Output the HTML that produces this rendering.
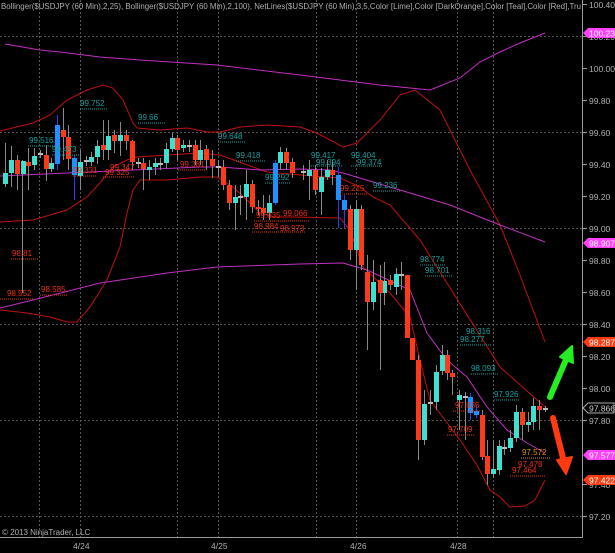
<!DOCTYPE html>
<html><head><meta charset="utf-8"><style>
html,body{margin:0;padding:0;background:#000;}
svg{display:block;font-family:"Liberation Sans",sans-serif;}
</style></head><body>
<svg width="615" height="553" viewBox="0 0 615 553" xmlns="http://www.w3.org/2000/svg">
<rect width="615" height="553" fill="#000"/>
<!-- grid -->
<g stroke="#555" stroke-width="1" stroke-dasharray="2,2">
<line x1="0" y1="36.5" x2="582" y2="36.5"/><line x1="0" y1="132.5" x2="582" y2="132.5"/>
<line x1="0" y1="228.5" x2="582" y2="228.5"/><line x1="0" y1="324.5" x2="582" y2="324.5"/>
<line x1="0" y1="420.5" x2="582" y2="420.5"/><line x1="0" y1="516.5" x2="582" y2="516.5"/>
<line x1="39.5" y1="0" x2="39.5" y2="537"/><line x1="80.5" y1="0" x2="80.5" y2="537"/>
<line x1="177.5" y1="0" x2="177.5" y2="537"/><line x1="218.5" y1="0" x2="218.5" y2="537"/>
<line x1="316.5" y1="0" x2="316.5" y2="537"/><line x1="356.5" y1="0" x2="356.5" y2="537"/>
<line x1="457.5" y1="0" x2="457.5" y2="537"/><line x1="493.5" y1="0" x2="493.5" y2="537"/>
</g>
<!-- bands -->
<g fill="none" stroke-width="1">
<polyline stroke="#c01010" points="0,131 33,123 50,115 67,100 87,90 103,85 113,88 123,100 133,123 137,128 160,130 187,128 207,132 220,132 240,127 267,125 300,127 317,133 343,147 357,143 367,133 380,120 400,95 415,90 440,110 470,170 500,225 520,275 545,342"/>
<polyline stroke="#c01010" points="0,222 33,220 67,210 87,197 100,183 113,167 127,160 137,157 167,155 200,153 220,155 253,167 267,172 300,175 340,178 360,187 373,197 390,205 420,240 445,280 500,367 545,407"/>
<polyline stroke="#c01010" points="0,310 27,313 50,317 67,322 77,322 90,307 107,280 120,247 127,213 133,190 140,180 167,180 200,177 217,177 233,187 247,200 260,213 275,217 293,217 340,218 350,230 363,267 390,293 410,317 420,360 430,400 445,420 460,440 477,465 490,490 500,497 510,507 525,506 535,500 545,480"/>
<polyline stroke="#c030c0" points="5,44 40,50 60,52 100,57 140,60 217,65 300,75 380,85 430,90 460,78 480,62 500,52 520,43 545,33"/>
<polyline stroke="#c030c0" points="0,176 67,173 133,170 200,167 220,167 260,170 300,169 330,170 343,173 373,182 400,190 450,205 500,225 545,242"/>
<polyline stroke="#c030c0" points="0,308 33,300 100,283 167,273 217,267 300,264 343,263 367,270 410,290 427,333 447,360 467,377 487,407 507,430 527,443 545,453"/>
</g>
<!-- wicks -->
<g stroke="#8a8a8a" stroke-width="1">
<line x1="5.5" y1="143" x2="5.5" y2="187"/><line x1="11.5" y1="146" x2="11.5" y2="187"/><line x1="17.5" y1="155" x2="17.5" y2="190"/><line x1="22.5" y1="160" x2="22.5" y2="293"/><line x1="28.5" y1="148" x2="28.5" y2="190"/><line x1="34.5" y1="148" x2="34.5" y2="170"/><line x1="40.5" y1="150" x2="40.5" y2="158"/><line x1="46.5" y1="145" x2="46.5" y2="181"/><line x1="51.5" y1="158" x2="51.5" y2="172"/><line x1="63.5" y1="108" x2="63.5" y2="160"/><line x1="68.5" y1="125" x2="68.5" y2="170"/><line x1="80.5" y1="150" x2="80.5" y2="190"/><line x1="86.5" y1="156" x2="86.5" y2="166"/><line x1="91.5" y1="152" x2="91.5" y2="166"/><line x1="97.5" y1="140" x2="97.5" y2="164"/><line x1="103.5" y1="120" x2="103.5" y2="160"/><line x1="108.5" y1="120" x2="108.5" y2="160"/><line x1="114.5" y1="130" x2="114.5" y2="153"/><line x1="120.5" y1="122" x2="120.5" y2="156"/><line x1="126.5" y1="130" x2="126.5" y2="150"/><line x1="132.5" y1="140" x2="132.5" y2="170"/><line x1="138.5" y1="158" x2="138.5" y2="168"/><line x1="143.5" y1="158" x2="143.5" y2="190"/><line x1="149.5" y1="160" x2="149.5" y2="180"/><line x1="155.5" y1="158" x2="155.5" y2="175"/><line x1="160.5" y1="158" x2="160.5" y2="170"/><line x1="166.5" y1="143" x2="166.5" y2="168"/><line x1="172.5" y1="133" x2="172.5" y2="152"/><line x1="177.5" y1="135" x2="177.5" y2="160"/><line x1="183.5" y1="140" x2="183.5" y2="152"/><line x1="189.5" y1="140" x2="189.5" y2="152"/><line x1="195.5" y1="140" x2="195.5" y2="165"/><line x1="200.5" y1="140" x2="200.5" y2="165"/><line x1="206.5" y1="145" x2="206.5" y2="170"/><line x1="212.5" y1="150" x2="212.5" y2="178"/><line x1="218.5" y1="160" x2="218.5" y2="177"/><line x1="223.5" y1="160" x2="223.5" y2="190"/><line x1="229.5" y1="180" x2="229.5" y2="210"/><line x1="235.5" y1="185" x2="235.5" y2="230"/><line x1="240.5" y1="185" x2="240.5" y2="215"/><line x1="246.5" y1="170" x2="246.5" y2="220"/><line x1="252.5" y1="180" x2="252.5" y2="213"/><line x1="258.5" y1="200" x2="258.5" y2="215"/><line x1="263.5" y1="195" x2="263.5" y2="220"/><line x1="269.5" y1="195" x2="269.5" y2="220"/><line x1="280.5" y1="147" x2="280.5" y2="170"/><line x1="286.5" y1="148" x2="286.5" y2="170"/><line x1="292.5" y1="158" x2="292.5" y2="178"/><line x1="303.5" y1="165" x2="303.5" y2="180"/><line x1="309.5" y1="160" x2="309.5" y2="200"/><line x1="315.5" y1="165" x2="315.5" y2="195"/><line x1="321.5" y1="168" x2="321.5" y2="215"/><line x1="327.5" y1="160" x2="327.5" y2="180"/><line x1="332.5" y1="160" x2="332.5" y2="185"/><line x1="350.5" y1="205" x2="350.5" y2="260"/><line x1="356.5" y1="200" x2="356.5" y2="290"/><line x1="361.5" y1="205" x2="361.5" y2="270"/><line x1="367.5" y1="255" x2="367.5" y2="350"/><line x1="373.5" y1="260" x2="373.5" y2="310"/><line x1="380.5" y1="265" x2="380.5" y2="370"/><line x1="384.5" y1="262" x2="384.5" y2="305"/><line x1="390.5" y1="275" x2="390.5" y2="290"/><line x1="396.5" y1="268" x2="396.5" y2="295"/><line x1="401.5" y1="262" x2="401.5" y2="290"/><line x1="418.5" y1="355" x2="418.5" y2="460"/><line x1="424.5" y1="390" x2="424.5" y2="445"/><line x1="430.5" y1="390" x2="430.5" y2="415"/><line x1="436.5" y1="365" x2="436.5" y2="410"/><line x1="442.5" y1="345" x2="442.5" y2="375"/><line x1="447.5" y1="350" x2="447.5" y2="380"/><line x1="452.5" y1="370" x2="452.5" y2="395"/><line x1="459.5" y1="390" x2="459.5" y2="430"/><line x1="465.5" y1="392" x2="465.5" y2="440"/><line x1="482.5" y1="410" x2="482.5" y2="460"/><line x1="487.5" y1="440" x2="487.5" y2="485"/><line x1="493.5" y1="440" x2="493.5" y2="478"/><line x1="499.5" y1="440" x2="499.5" y2="475"/><line x1="504.5" y1="440" x2="504.5" y2="455"/><line x1="510.5" y1="430" x2="510.5" y2="452"/><line x1="516.5" y1="405" x2="516.5" y2="442"/><line x1="522.5" y1="408" x2="522.5" y2="440"/><line x1="528.5" y1="412" x2="528.5" y2="432"/><line x1="533.5" y1="398" x2="533.5" y2="430"/><line x1="539.5" y1="400" x2="539.5" y2="430"/><line x1="545.5" y1="406" x2="545.5" y2="412"/>
</g>
<!-- blue wicks -->
<g stroke="#2040ff" stroke-width="1">
<line x1="57.5" y1="115" x2="57.5" y2="170"/><line x1="74.5" y1="155" x2="74.5" y2="200"/><line x1="275.5" y1="160" x2="275.5" y2="205"/><line x1="338.5" y1="167" x2="338.5" y2="228"/><line x1="344.5" y1="195" x2="344.5" y2="228"/><line x1="470.5" y1="393" x2="470.5" y2="420"/><line x1="476.5" y1="405" x2="476.5" y2="418"/>
</g>
<!-- teal bodies -->
<g fill="#40e0d0">
<rect x="3" y="173" width="5" height="11"/><rect x="9" y="160" width="5" height="13"/><rect x="21" y="161" width="5" height="13"/><rect x="32" y="156" width="5" height="9"/><rect x="49" y="163" width="5" height="6"/><rect x="78" y="162" width="5" height="14"/><rect x="89" y="157" width="5" height="5"/><rect x="95" y="146" width="5" height="11"/><rect x="106" y="136" width="5" height="14"/><rect x="118" y="135" width="5" height="6"/><rect x="147" y="167" width="5" height="3"/><rect x="153" y="163" width="5" height="4"/><rect x="164" y="149" width="5" height="14"/><rect x="170" y="138" width="5" height="11"/><rect x="181" y="145" width="5" height="3"/><rect x="198" y="150" width="5" height="10"/><rect x="233" y="197" width="5" height="6"/><rect x="244" y="184" width="5" height="13"/><rect x="267" y="203" width="5" height="10"/><rect x="278" y="152" width="5" height="11"/><rect x="307" y="170" width="5" height="6"/><rect x="319" y="177" width="5" height="15"/><rect x="325" y="170" width="5" height="7"/><rect x="354" y="209" width="5" height="41"/><rect x="371" y="282" width="5" height="20"/><rect x="382" y="281" width="5" height="12"/><rect x="394" y="274" width="5" height="13"/><rect x="422" y="404" width="5" height="36"/><rect x="434" y="372" width="5" height="30"/><rect x="440" y="355" width="5" height="16"/><rect x="457" y="395" width="5" height="5"/><rect x="491" y="469" width="5" height="5"/><rect x="497" y="446" width="5" height="24"/><rect x="508" y="438" width="5" height="10"/><rect x="514" y="412" width="5" height="26"/><rect x="526" y="422" width="5" height="3"/><rect x="531" y="406" width="5" height="16"/>
</g>
<!-- red bodies -->
<g fill="#ff3a1a">
<rect x="15" y="160" width="5" height="14"/><rect x="26" y="162" width="5" height="4"/><rect x="44" y="155" width="5" height="14"/><rect x="61" y="130" width="5" height="7"/><rect x="66" y="137" width="5" height="22"/><rect x="101" y="145" width="5" height="5"/><rect x="112" y="135" width="5" height="6"/><rect x="124" y="135" width="5" height="6"/><rect x="130" y="141" width="5" height="21"/><rect x="141" y="163" width="5" height="6"/><rect x="175" y="138" width="5" height="12"/><rect x="193" y="145" width="5" height="15"/><rect x="204" y="149" width="5" height="11"/><rect x="210" y="159" width="5" height="7"/><rect x="221" y="167" width="5" height="18"/><rect x="227" y="185" width="5" height="18"/><rect x="250" y="184" width="5" height="23"/><rect x="256" y="207" width="5" height="2"/><rect x="261" y="208" width="5" height="5"/><rect x="284" y="152" width="5" height="11"/><rect x="290" y="162" width="5" height="11"/><rect x="313" y="170" width="5" height="20"/><rect x="330" y="170" width="5" height="5"/><rect x="348" y="209" width="5" height="41"/><rect x="359" y="209" width="5" height="56"/><rect x="365" y="272" width="5" height="30"/><rect x="378" y="280" width="5" height="13"/><rect x="388" y="280" width="5" height="5"/><rect x="405" y="275" width="5" height="63"/><rect x="410" y="338" width="5" height="22"/><rect x="416" y="360" width="5" height="80"/><rect x="445" y="355" width="5" height="18"/><rect x="450" y="373" width="5" height="4"/><rect x="480" y="415" width="5" height="42"/><rect x="485" y="456" width="5" height="18"/><rect x="520" y="412" width="5" height="13"/><rect x="537" y="406" width="5" height="4"/>
</g>
<g fill="#bbb"><rect x="38" y="153" width="5" height="2"/><rect x="84" y="160" width="5" height="2"/><rect x="136" y="162" width="5" height="2"/><rect x="158" y="163" width="5" height="2"/><rect x="187" y="145" width="5" height="2"/><rect x="216" y="166" width="5" height="2"/><rect x="238" y="196" width="5" height="2"/><rect x="301" y="171" width="5" height="2"/><rect x="399" y="274" width="5" height="2"/><rect x="428" y="402" width="5" height="2"/><rect x="463" y="396" width="5" height="2"/><rect x="502" y="447" width="5" height="2"/><rect x="543" y="408" width="5" height="2"/></g>
<!-- blue bodies -->
<g fill="#1e90ff">
<rect x="55" y="125" width="5" height="39"/><rect x="72" y="158" width="5" height="17"/><rect x="273" y="163" width="5" height="40"/><rect x="336" y="175" width="5" height="25"/><rect x="342" y="200" width="5" height="10"/><rect x="468" y="397" width="5" height="16"/><rect x="474" y="411" width="5" height="4"/>
</g>
<!-- teal labels -->
<g fill="#14a0a0" font-size="8">
<text x="80" y="106">99.752</text><text x="138" y="120">99.66</text><text x="29" y="143">99.516</text><text x="52" y="152">99.473</text><text x="218" y="139">99.648</text><text x="236" y="158">99.418</text><text x="265" y="180">99.292</text><text x="311" y="158">99.417</text><text x="316" y="165">99.394</text><text x="351" y="158">99.404</text><text x="357" y="165">99.374</text><text x="373" y="188">99.236</text><text x="420" y="262">98.774</text><text x="425" y="273">98.701</text><text x="466" y="334">98.316</text><text x="460" y="342">98.277</text><text x="471" y="371">98.093</text><text x="494" y="397">97.926</text>
</g>
<g stroke="#14a0a0" stroke-width="1" stroke-dasharray="1,1">
<line x1="80" y1="109" x2="107" y2="109"/><line x1="138" y1="123" x2="165" y2="123"/><line x1="28" y1="146" x2="56" y2="146"/><line x1="52" y1="155" x2="79" y2="155"/><line x1="218" y1="142" x2="245" y2="142"/><line x1="236" y1="161" x2="266" y2="161"/><line x1="265" y1="183" x2="291" y2="183"/><line x1="311" y1="166" x2="343" y2="166"/><line x1="351" y1="166" x2="383" y2="166"/><line x1="373" y1="191" x2="400" y2="191"/><line x1="420" y1="265" x2="446" y2="265"/><line x1="425" y1="276" x2="452" y2="276"/><line x1="460" y1="345" x2="492" y2="345"/><line x1="471" y1="374" x2="498" y2="374"/><line x1="494" y1="400" x2="520" y2="400"/>
</g>
<!-- red labels -->
<g fill="#e8300f" font-size="8">
<text x="12" y="256">98.81</text><text x="7" y="296">98.552</text><text x="41" y="292">98.585</text><text x="73" y="173">99.331</text><text x="110" y="170">99.347</text><text x="105" y="175">99.325</text><text x="180" y="167">99.381</text><text x="256" y="218">99.035</text><text x="283" y="216">99.066</text><text x="254" y="229">98.984</text><text x="280" y="231">98.973</text><text x="340" y="191">99.215</text><text x="455" y="408">97.836</text><text x="448" y="432">97.709</text><text x="518" y="467">97.478</text><text x="512" y="473">97.464</text>
</g>
<g stroke="#e8300f" stroke-width="1" stroke-dasharray="1,1">
<line x1="11" y1="259" x2="38" y2="259"/><line x1="0" y1="299" x2="33" y2="299"/><line x1="40" y1="295" x2="67" y2="295"/><line x1="73" y1="176" x2="96" y2="176"/><line x1="103" y1="177" x2="135" y2="177"/><line x1="178" y1="170" x2="205" y2="170"/><line x1="254" y1="221" x2="310" y2="221"/><line x1="252" y1="232" x2="305" y2="232"/><line x1="340" y1="194" x2="367" y2="194"/><line x1="453" y1="411" x2="480" y2="411"/><line x1="447" y1="435" x2="475" y2="435"/><line x1="510" y1="476" x2="545" y2="476"/>
</g>
<text x="522" y="455" fill="#e09000" font-size="8">97.572</text>
<line x1="521" y1="458" x2="550" y2="458" stroke="#e09000" stroke-dasharray="1,1"/>
<!-- arrows -->
<line x1="550" y1="397" x2="568" y2="355" stroke="#22ee22" stroke-width="6" stroke-linecap="round"/>
<polygon points="572,346 573,363 560,357" fill="#22ee22" stroke="#22ee22" stroke-width="2" stroke-linejoin="round"/>
<line x1="553" y1="418" x2="564" y2="462" stroke="#ff3a10" stroke-width="6" stroke-linecap="round"/>
<polygon points="566,474 557,460 572,457" fill="#ff3a10" stroke="#ff3a10" stroke-width="2" stroke-linejoin="round"/>
<!-- axes -->
<line x1="582.5" y1="0" x2="582.5" y2="537" stroke="#999"/>
<line x1="0" y1="537.5" x2="583" y2="537.5" stroke="#999"/>
<g stroke="#999"><line x1="583" y1="4.5" x2="587" y2="4.5"/><line x1="583" y1="36.5" x2="587" y2="36.5"/><line x1="583" y1="68.5" x2="587" y2="68.5"/><line x1="583" y1="100.5" x2="587" y2="100.5"/><line x1="583" y1="132.5" x2="587" y2="132.5"/><line x1="583" y1="164.5" x2="587" y2="164.5"/><line x1="583" y1="196.5" x2="587" y2="196.5"/><line x1="583" y1="228.5" x2="587" y2="228.5"/><line x1="583" y1="260.5" x2="587" y2="260.5"/><line x1="583" y1="292.5" x2="587" y2="292.5"/><line x1="583" y1="324.5" x2="587" y2="324.5"/><line x1="583" y1="356.5" x2="587" y2="356.5"/><line x1="583" y1="388.5" x2="587" y2="388.5"/><line x1="583" y1="420.5" x2="587" y2="420.5"/><line x1="583" y1="484.5" x2="587" y2="484.5"/><line x1="583" y1="516.5" x2="587" y2="516.5"/></g>
<g fill="#b0b0b0" font-size="8.5">
<text x="589" y="8">100.40</text><text x="589" y="40">100.20</text><text x="589" y="72">100.00</text><text x="589" y="104">99.80</text><text x="589" y="136">99.60</text><text x="589" y="168">99.40</text><text x="589" y="200">99.20</text><text x="589" y="232">99.00</text><text x="589" y="264">98.80</text><text x="589" y="296">98.60</text><text x="589" y="328">98.40</text><text x="589" y="360">98.20</text><text x="589" y="392">98.00</text><text x="589" y="424">97.80</text><text x="589" y="488">97.40</text><text x="589" y="520">97.20</text>
</g>
<!-- price markers -->
<polygon points="583,33 588,28 615,28 615,38 588,38" fill="#ff40ff"/>
<text x="589" y="36.5" fill="#fff" font-size="8.5">100.237</text>
<polygon points="583,243 588,238 615,238 615,248 588,248" fill="#ff40ff"/>
<text x="589" y="246.5" fill="#fff" font-size="8.5">98.907</text>
<polygon points="583,342 588,337 615,337 615,347 588,347" fill="#ff3a10"/>
<text x="589" y="345.5" fill="#fff" font-size="8.5">98.287</text>
<polygon points="583,408 588,403 614,403 614,413 588,413" fill="#000" stroke="#aaa"/>
<text x="589" y="411.5" fill="#ccc" font-size="8.5">97.866</text>
<polygon points="583,455 588,450 615,450 615,460 588,460" fill="#ff40ff"/>
<text x="589" y="458.5" fill="#fff" font-size="8.5">97.577</text>
<polygon points="583,480 588,475 615,475 615,485 588,485" fill="#ff3a10"/>
<text x="589" y="483.5" fill="#fff" font-size="8.5">97.422</text>
<!-- header / footer -->
<text x="1" y="9" fill="#b0b0b0" font-size="8" textLength="580" lengthAdjust="spacingAndGlyphs">Bollinger($USDJPY (60 Min),2,25), Bollinger($USDJPY (60 Min),2,100), NetLines($USDJPY (60 Min),3,5,Color [Lime],Color [DarkOrange],Color [Teal],Color [Red],Tru</text>
<text x="2" y="535" fill="#b0b0b0" font-size="8">© 2013 NinjaTrader, LLC</text>
<g fill="#b0b0b0" font-size="8.5">
<text x="73" y="549">4/24</text><text x="211" y="549">4/25</text><text x="350" y="549">4/26</text><text x="450" y="549">4/28</text>
</g>
</svg>
</body></html>
